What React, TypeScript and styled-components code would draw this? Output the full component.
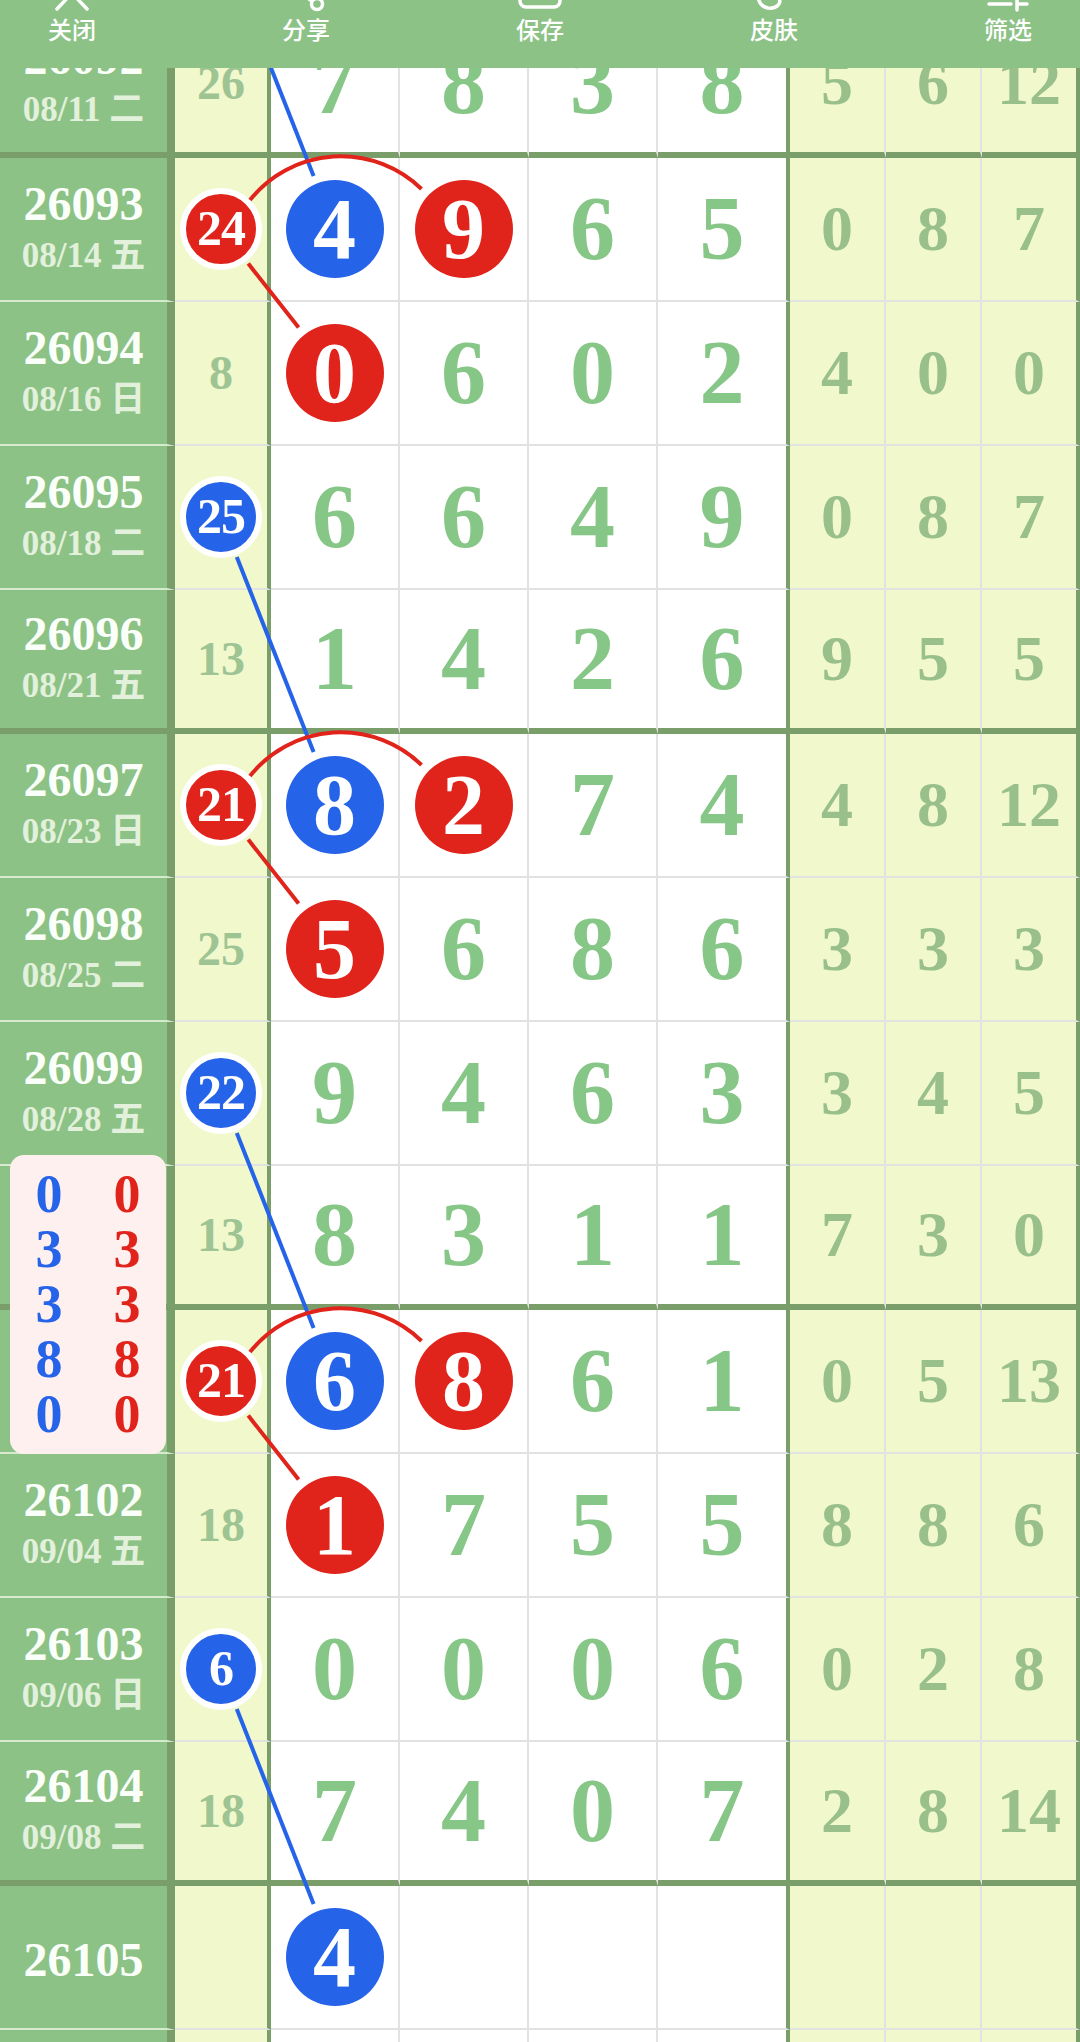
import React, { useLayoutEffect, useRef } from 'react'
import styled, { createGlobalStyle } from 'styled-components'

type Tone = 'red' | 'blue'

interface RowData {
  period: string
  date?: string
  miss?: number
  missBall?: Tone
  main: (number | null)[]
  balls?: (Tone | null)[]
  side: (number | null)[]
  groupEnd?: boolean
  // the period label sits under the floating summary card
  covered?: boolean
}

const GREEN = '#8cc286'
const DARK = '#7a9e6a'
const YELLOW = '#f0f8cc'
const LINE = '#e2e2e2'
const RED = '#e0241c'
const BLUE = '#2563e8'
const SERIF = `'Liberation Serif', 'Noto Sans CJK SC', serif`
const ROW_H = 144
const TOOLBAR_H = 68
const SCROLL_TOP = 54

const rows: RowData[] = [
  { period: '26092', date: '08/11 二', miss: 26, main: [7, 8, 3, 8], side: [5, 6, 12], groupEnd: true },
  { period: '26093', date: '08/14 五', miss: 24, missBall: 'red', main: [4, 9, 6, 5], balls: ['blue', 'red'], side: [0, 8, 7] },
  { period: '26094', date: '08/16 日', miss: 8, main: [0, 6, 0, 2], balls: ['red'], side: [4, 0, 0] },
  { period: '26095', date: '08/18 二', miss: 25, missBall: 'blue', main: [6, 6, 4, 9], side: [0, 8, 7] },
  { period: '26096', date: '08/21 五', miss: 13, main: [1, 4, 2, 6], side: [9, 5, 5], groupEnd: true },
  { period: '26097', date: '08/23 日', miss: 21, missBall: 'red', main: [8, 2, 7, 4], balls: ['blue', 'red'], side: [4, 8, 12] },
  { period: '26098', date: '08/25 二', miss: 25, main: [5, 6, 8, 6], balls: ['red'], side: [3, 3, 3] },
  { period: '26099', date: '08/28 五', miss: 22, missBall: 'blue', main: [9, 4, 6, 3], side: [3, 4, 5] },
  { period: '26100', date: '08/30 日', miss: 13, main: [8, 3, 1, 1], side: [7, 3, 0], groupEnd: true, covered: true },
  { period: '26101', date: '09/01 二', miss: 21, missBall: 'red', main: [6, 8, 6, 1], balls: ['blue', 'red'], side: [0, 5, 13], covered: true },
  { period: '26102', date: '09/04 五', miss: 18, main: [1, 7, 5, 5], balls: ['red'], side: [8, 8, 6] },
  { period: '26103', date: '09/06 日', miss: 6, missBall: 'blue', main: [0, 0, 0, 6], side: [0, 2, 8] },
  { period: '26104', date: '09/08 二', miss: 18, main: [7, 4, 0, 7], side: [2, 8, 14], groupEnd: true },
  { period: '26105', main: [4, null, null, null], balls: ['blue'], side: [null, null, null] },
  { period: '', main: [null, null, null, null], side: [null, null, null] },
]

const summary = [0, 3, 3, 8, 0]

const GlobalStyle = createGlobalStyle`
  html, body { margin: 0; padding: 0; background: #fff; }
  body { font-family: ${SERIF}; }
`

const Page = styled.div`
  width: 1080px;
  height: 2042px;
  display: flex;
  flex-direction: column;
  overflow: hidden;
  background: #fff;
`

const Toolbar = styled.div`
  flex: none;
  height: ${TOOLBAR_H}px;
  box-sizing: border-box;
  padding: 0 32px;
  display: flex;
  justify-content: space-between;
  background: ${GREEN};
  overflow: hidden;
`

const Tool = styled.div`
  width: 80px;
  margin-top: -32px;
  display: flex;
  flex-direction: column;
  align-items: center;
`

const ToolLabel = styled.span`
  margin-top: 4px;
  font: 500 24px/26px 'Noto Sans CJK SC', sans-serif;
  color: #fff;
`

const Viewport = styled.div`
  flex: 1;
  overflow: hidden;
`

const Board = styled.div`
  position: relative;
`

const Row = styled.div`
  display: grid;
  grid-template-columns: 175px 96px 129px 129px 129px 132px 96px 96px 98px;
  height: ${ROW_H}px;
`

const Cell = styled.div<{ $end?: boolean }>`
  box-sizing: border-box;
  display: flex;
  align-items: center;
  justify-content: center;
  border-bottom: ${p => (p.$end ? `6px solid ${DARK}` : `2px solid ${LINE}`)};
`

const PeriodCell = styled(Cell)`
  flex-direction: column;
  background: ${GREEN};
  border-right: 8px solid ${DARK};
  ${p => (p.$end ? '' : 'border-bottom-color: #d6eacf;')}
`

const MissCell = styled(Cell)`
  background: ${YELLOW};
  border-right: 4px solid ${DARK};
`

const NumCell = styled(Cell)<{ $last?: boolean }>`
  background: #fff;
  border-right: ${p => (p.$last ? `4px solid ${DARK}` : `2px solid ${LINE}`)};
`

const SideCell = styled(Cell)<{ $last?: boolean }>`
  background: ${YELLOW};
  border-right: ${p => (p.$last ? `4px solid ${DARK}` : `2px solid ${LINE}`)};
`

const Period = styled.div`
  margin-top: 6px;
  font: bold 48px/36px ${SERIF};
  color: #fbfff9;
`

const DateText = styled.div`
  margin-top: 12px;
  font: bold 35px/44px ${SERIF};
  color: #e2f0dc;
`

const MissNum = styled.span`
  font: bold 48px/0.75 ${SERIF};
  color: #9ec493;
`

const MainNum = styled.span`
  font: bold 90px/0.75 ${SERIF};
  color: #86c686;
`

const SideNum = styled.span`
  font: bold 64px/0.75 ${SERIF};
  color: #99bf8b;
`

const Ball = styled.div<{ $tone: Tone }>`
  width: 98px;
  height: 98px;
  border-radius: 50%;
  display: flex;
  align-items: center;
  justify-content: center;
  background: ${p => (p.$tone === 'red' ? RED : BLUE)};
  color: #fff;
  font: bold 86px/0.75 ${SERIF};
`

const SmallBall = styled(Ball)`
  width: 70px;
  height: 70px;
  border: 6px solid #fff;
  font-size: 50px;
  letter-spacing: -1px;
`

const Links = styled.svg`
  position: absolute;
  top: 0;
  left: 0;
  overflow: visible;
  pointer-events: none;
  z-index: 2;
`

const Summary = styled.div`
  position: absolute;
  left: 10px;
  top: 1141px;
  width: 156px;
  height: 299px;
  box-sizing: border-box;
  padding: 12px 0;
  border-radius: 14px;
  background: #fff0f0;
  display: grid;
  grid-template-columns: 1fr 1fr;
  grid-template-rows: repeat(5, 55px);
  grid-auto-flow: column;
  z-index: 3;
`

const SummaryDigit = styled.span<{ $tone: Tone }>`
  text-align: center;
  font: bold 54px/55px ${SERIF};
  color: ${p => (p.$tone === 'red' ? RED : BLUE)};
`

const icon = { width: 44, height: 44, viewBox: '0 0 44 44', fill: 'none', stroke: '#fff', strokeWidth: 3.5, strokeLinecap: 'round' as const, strokeLinejoin: 'round' as const }

const tools: { label: string; svg: React.ReactNode }[] = [
  { label: '关闭', svg: <svg {...icon}><path d="M7 9 L37 41 M37 9 L7 41" /></svg> },
  {
    label: '分享',
    svg: (
      <svg {...icon}>
        <circle cx="33" cy="8" r="5.5" />
        <circle cx="11" cy="22" r="5.5" />
        <circle cx="33" cy="36" r="5.5" />
        <path d="M16 19 L28 11 M16 25 L28 33" />
      </svg>
    ),
  },
  { label: '保存', svg: <svg {...icon}><rect x="2" y="6" width="40" height="33" rx="6" /><path d="M22 8 V24 M15 18 L22 25 L29 18" /></svg> },
  { label: '皮肤', svg: <svg {...icon}><path d="M10 14 C3 24 5 38 16 40 C24 41 30 36 27 30 C25 26 30 24 34 24 C40 24 42 16 36 10 C28 2 16 5 10 14 Z" /></svg> },
  { label: '筛选', svg: <svg {...icon}><path d="M3 12 H20 M27 6 V18 M27 12 H41 M3 36 H25 M31 30 V42 M31 36 H41" /></svg> },
]

const MISS_X = 221
const C1_X = 334.5
const C2_X = 463.5
const cy = (i: number) => i * ROW_H + 71

const seg = (ax: number, ay: number, bx: number, by: number, ra: number, rb: number) => {
  const dx = bx - ax
  const dy = by - ay
  const len = Math.hypot(dx, dy)
  const ux = dx / len
  const uy = dy / len
  return { x1: ax + ux * ra, y1: ay + uy * ra, x2: bx - ux * rb, y2: by - uy * rb }
}

// blue: miss-column ball -> first-column ball two rows down (row -1 is above the screen)
const blueLinks = [[-1, 1], [3, 5], [7, 9], [11, 13]]
const redGroups = [1, 5, 9]

const TrendLines = () => (
  <Links width={1080} height={rows.length * ROW_H}>
    {blueLinks.map(([a, b]) => (
      <line key={`b${a}`} {...seg(MISS_X, cy(a), C1_X, cy(b), 43, 57)} stroke={BLUE} strokeWidth={4} />
    ))}
    {redGroups.map(g => {
      const y = cy(g)
      return (
        <g key={`r${g}`} stroke={RED} strokeWidth={4} fill="none">
          <line {...seg(MISS_X, y, C1_X, cy(g + 1), 44, 58)} />
          <path d={`M ${MISS_X + 29} ${y - 29} A 116 116 0 0 1 ${C2_X - 42} ${y - 40}`} />
        </g>
      )
    })}
  </Links>
)

export default function App() {
  const viewport = useRef<HTMLDivElement>(null)

  // the chart is shown scrolled a little way down
  useLayoutEffect(() => {
    if (viewport.current) viewport.current.scrollTop = SCROLL_TOP
  }, [])

  return (
    <Page>
      <GlobalStyle />
      <Toolbar>
        {tools.map(t => (
          <Tool key={t.label}>
            {t.svg}
            <ToolLabel>{t.label}</ToolLabel>
          </Tool>
        ))}
      </Toolbar>
      <Viewport ref={viewport}>
        <Board>
          {rows.map((r, i) => (
            <Row key={i}>
              <PeriodCell $end={r.groupEnd}>
                {!r.covered && r.period && <Period>{r.period}</Period>}
                {!r.covered && r.date && <DateText>{r.date}</DateText>}
              </PeriodCell>
              <MissCell $end={r.groupEnd}>
                {r.missBall ? (
                  <SmallBall $tone={r.missBall}>{r.miss}</SmallBall>
                ) : r.miss != null ? (
                  <MissNum>{r.miss}</MissNum>
                ) : null}
              </MissCell>
              {r.main.map((n, j) => {
                const tone = r.balls?.[j]
                return (
                  <NumCell key={j} $end={r.groupEnd} $last={j === 3}>
                    {n == null ? null : tone ? <Ball $tone={tone}>{n}</Ball> : <MainNum>{n}</MainNum>}
                  </NumCell>
                )
              })}
              {r.side.map((n, j) => (
                <SideCell key={j} $end={r.groupEnd} $last={j === 2}>
                  {n != null && <SideNum>{n}</SideNum>}
                </SideCell>
              ))}
            </Row>
          ))}
          <TrendLines />
          <Summary>
            {summary.map((d, k) => (
              <SummaryDigit key={`b${k}`} $tone="blue">{d}</SummaryDigit>
            ))}
            {summary.map((d, k) => (
              <SummaryDigit key={`r${k}`} $tone="red">{d}</SummaryDigit>
            ))}
          </Summary>
        </Board>
      </Viewport>
    </Page>
  )
}
